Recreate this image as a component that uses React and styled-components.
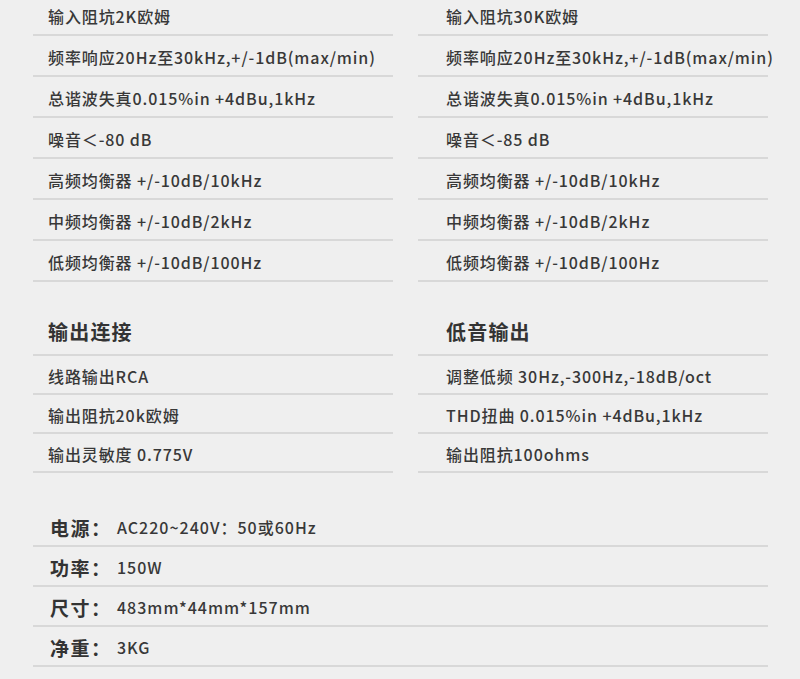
import React from 'react';
import styled, { createGlobalStyle } from 'styled-components';

const GlobalStyle = createGlobalStyle`
  html, body {
    margin: 0;
    padding: 0;
    background: #efefef;
  }
  body {
    font-family: 'Noto Sans CJK SC', 'Noto Sans', sans-serif;
    color: #383838;
  }
`;

const Page = styled.main`
  width: 800px;
  height: 679px;
  overflow: hidden;
  box-sizing: border-box;
  padding-left: 33px;
  background: #efefef;
`;

const Columns = styled.div`
  display: grid;
  grid-template-columns: 360px 350px;
  column-gap: 25px;
  margin-top: -5px;
`;

const Column = styled.section`
  display: flex;
  flex-direction: column;
`;

const Row = styled.div`
  display: flex;
  align-items: center;
  box-sizing: border-box;
  height: ${p => p.h || 41}px;
  padding: 3px 0 0 ${p => p.inset}px;
  border-bottom: 2px solid #d8d8d8;
  font-size: 16px;
  font-weight: 500;
  letter-spacing: 0.9px;
  white-space: nowrap;
`;

const Heading = styled.h2`
  display: flex;
  align-items: flex-end;
  box-sizing: border-box;
  height: 74px;
  margin: 0;
  padding: 0 0 10px ${p => p.inset}px;
  border-bottom: 2px solid #d8d8d8;
  font-size: 20px;
  font-weight: 700;
  letter-spacing: 1.2px;
  line-height: 24px;
  color: #333;
`;

const Specs = styled.section`
  width: 735px;
  margin-top: 34px;
`;

const SpecRow = styled.div`
  display: flex;
  align-items: center;
  box-sizing: border-box;
  height: 40px;
  padding: 2px 0 0 17px;
  border-bottom: 2px solid #d8d8d8;
  white-space: nowrap;
`;

const SpecLabel = styled.span`
  width: 67px;
  font-size: 19px;
  font-weight: 700;
  letter-spacing: 1.5px;
  color: #333;
`;

const SpecValue = styled.span`
  font-size: 16px;
  font-weight: 500;
  letter-spacing: 1px;
`;

const inputLeft = [
  '输入阻坑2K欧姆',
  '频率响应20Hz至30kHz,+/-1dB(max/min)',
  '总谐波失真0.015%in +4dBu,1kHz',
  '噪音＜-80 dB',
  '高频均衡器 +/-10dB/10kHz',
  '中频均衡器 +/-10dB/2kHz',
  '低频均衡器 +/-10dB/100Hz'
];

const inputRight = [
  '输入阻坑30K欧姆',
  '频率响应20Hz至30kHz,+/-1dB(max/min)',
  '总谐波失真0.015%in +4dBu,1kHz',
  '噪音＜-85 dB',
  '高频均衡器 +/-10dB/10kHz',
  '中频均衡器 +/-10dB/2kHz',
  '低频均衡器 +/-10dB/100Hz'
];

const outputs = {
  title: '输出连接',
  items: ['线路输出RCA', '输出阻抗20k欧姆', '输出灵敏度 0.775V']
};

const bass = {
  title: '低音输出',
  items: ['调整低频 30Hz,-300Hz,-18dB/oct', 'THD扭曲 0.015%in +4dBu,1kHz', '输出阻抗100ohms']
};

const specs = [
  ['电源：', 'AC220~240V：50或60Hz'],
  ['功率：', '150W'],
  ['尺寸：', '483mm*44mm*157mm'],
  ['净重：', '3KG']
];

const SpecColumn = ({ rows, section, inset }) => (
  <Column>
    {rows.map(r => (
      <Row key={r} inset={inset}>
        {r}
      </Row>
    ))}
    <Heading inset={inset}>{section.title}</Heading>
    {section.items.map(r => (
      <Row key={r} inset={inset} h={39}>
        {r}
      </Row>
    ))}
  </Column>
);

export default function App() {
  return (
    <Page>
      <GlobalStyle />
      <Columns>
        <SpecColumn rows={inputLeft} section={outputs} inset={15} />
        <SpecColumn rows={inputRight} section={bass} inset={28} />
      </Columns>
      <Specs>
        {specs.map(([label, value]) => (
          <SpecRow key={label}>
            <SpecLabel>{label}</SpecLabel>
            <SpecValue>{value}</SpecValue>
          </SpecRow>
        ))}
      </Specs>
    </Page>
  );
}
